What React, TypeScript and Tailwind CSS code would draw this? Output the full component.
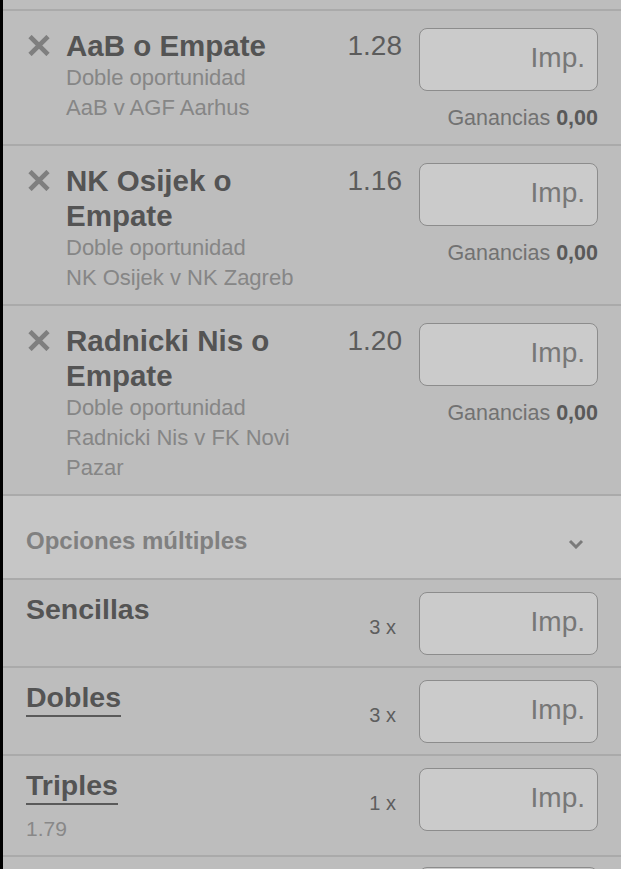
import React from "react";

const bets = [
  { title: "AaB o Empate", odds: "1.28", lines: ["Doble oportunidad", "AaB v AGF Aarhus"] },
  { title: "NK Osijek o Empate", odds: "1.16", lines: ["Doble oportunidad", "NK Osijek v NK Zagreb"] },
  { title: "Radnicki Nis o Empate", odds: "1.20", lines: ["Doble oportunidad", "Radnicki Nis v FK Novi Pazar"] },
];

const multiples = [
  { label: "Sencillas", count: "3 x", underline: false, odds: "" },
  { label: "Dobles", count: "3 x", underline: true, odds: "" },
  { label: "Triples", count: "1 x", underline: true, odds: "1.79" },
];

function XIcon() {
  return (
    <svg width="22" height="21" viewBox="0 0 22 21" fill="none">
      <path d="M2 1.5 L20 19.5 M20 1.5 L2 19.5" stroke="#7f7f7f" strokeWidth="4.6" strokeLinecap="butt" />
    </svg>
  );
}

function Stake({ label = true }: { label?: boolean }) {
  return (
    <div className="w-[179px] h-[63px] shrink-0 rounded-[8px] border-[1.5px] border-[#8c8c8c] bg-[#cbcbcb] flex items-center justify-end pr-[12px] pb-[4px]">
      {label && <span className="text-[28px] text-[#777777] leading-none">Imp.</span>}
    </div>
  );
}

export default function App() {
  return (
    <div className="w-[621px] h-[869px] overflow-hidden bg-[#bdbdbd] border-l-[3px] border-black font-['Liberation_Sans',Arial,sans-serif]">
      <div className="h-[9px]" />
      {bets.map((b) => (
        <div key={b.title} className="border-t-2 border-[#aaaaaa] flex pl-[25px] pr-[23px] pt-[17px] pb-[11px]">
          <div className="w-[22px] h-[35px] flex items-center shrink-0">
            <XIcon />
          </div>
          <div className="w-[262px] ml-[16px] shrink-0">
            <div className="text-[29.5px] font-bold leading-[35px] text-[#545454]">{b.title}</div>
            {b.lines.map((l) => (
              <div key={l} className="text-[22px] leading-[30px] text-[#868686]">
                {l}
              </div>
            ))}
          </div>
          <div className="flex-1 text-right text-[28px] leading-[35px] text-[#5c5c5c] pr-[17px]">{b.odds}</div>
          <div className="flex flex-col items-end">
            <Stake />
            <div className="mt-[12px] text-[21.5px] leading-[30px] text-[#727272] whitespace-nowrap">
              Ganancias <span className="font-bold text-[#595959]">0,00</span>
            </div>
          </div>
        </div>
      ))}
      <div className="border-t-2 border-[#aaaaaa] bg-[#c6c6c6] h-[84px] flex items-center justify-between pl-[23px] pr-[37px] pt-[7px]">
        <span className="text-[24px] font-bold text-[#808080]">Opciones múltiples</span>
        <svg width="16" height="10" viewBox="0 0 16 10" fill="none" className="mt-[6px]">
          <path d="M2 2 L8 8 L14 2" stroke="#7a7a7a" strokeWidth="3" />
        </svg>
      </div>
      {multiples.map((m) => (
        <div key={m.label} className="border-t-2 border-[#aaaaaa] flex items-start justify-between pl-[23px] pr-[23px] pt-[12px] pb-[11px]">
          <div>
            <span
              className={`inline-block text-[28.5px] font-bold leading-[35px] text-[#545454] ${
                m.underline ? "border-b-2 border-[#5a5a5a]" : ""
              }`}
            >
              {m.label}
            </span>
            {m.odds && <div className="mt-[9px] text-[21px] leading-[30px] text-[#888888]">{m.odds}</div>}
          </div>
          <div className="flex items-center">
            <span className="text-[20px] text-[#5e5e5e] pt-[7px] mr-[23px]">{m.count}</span>
            <Stake />
          </div>
        </div>
      ))}
      <div className="border-t-2 border-[#aaaaaa] flex justify-end pr-[23px] pt-[10px]">
        <Stake label={false} />
      </div>
    </div>
  );
}
